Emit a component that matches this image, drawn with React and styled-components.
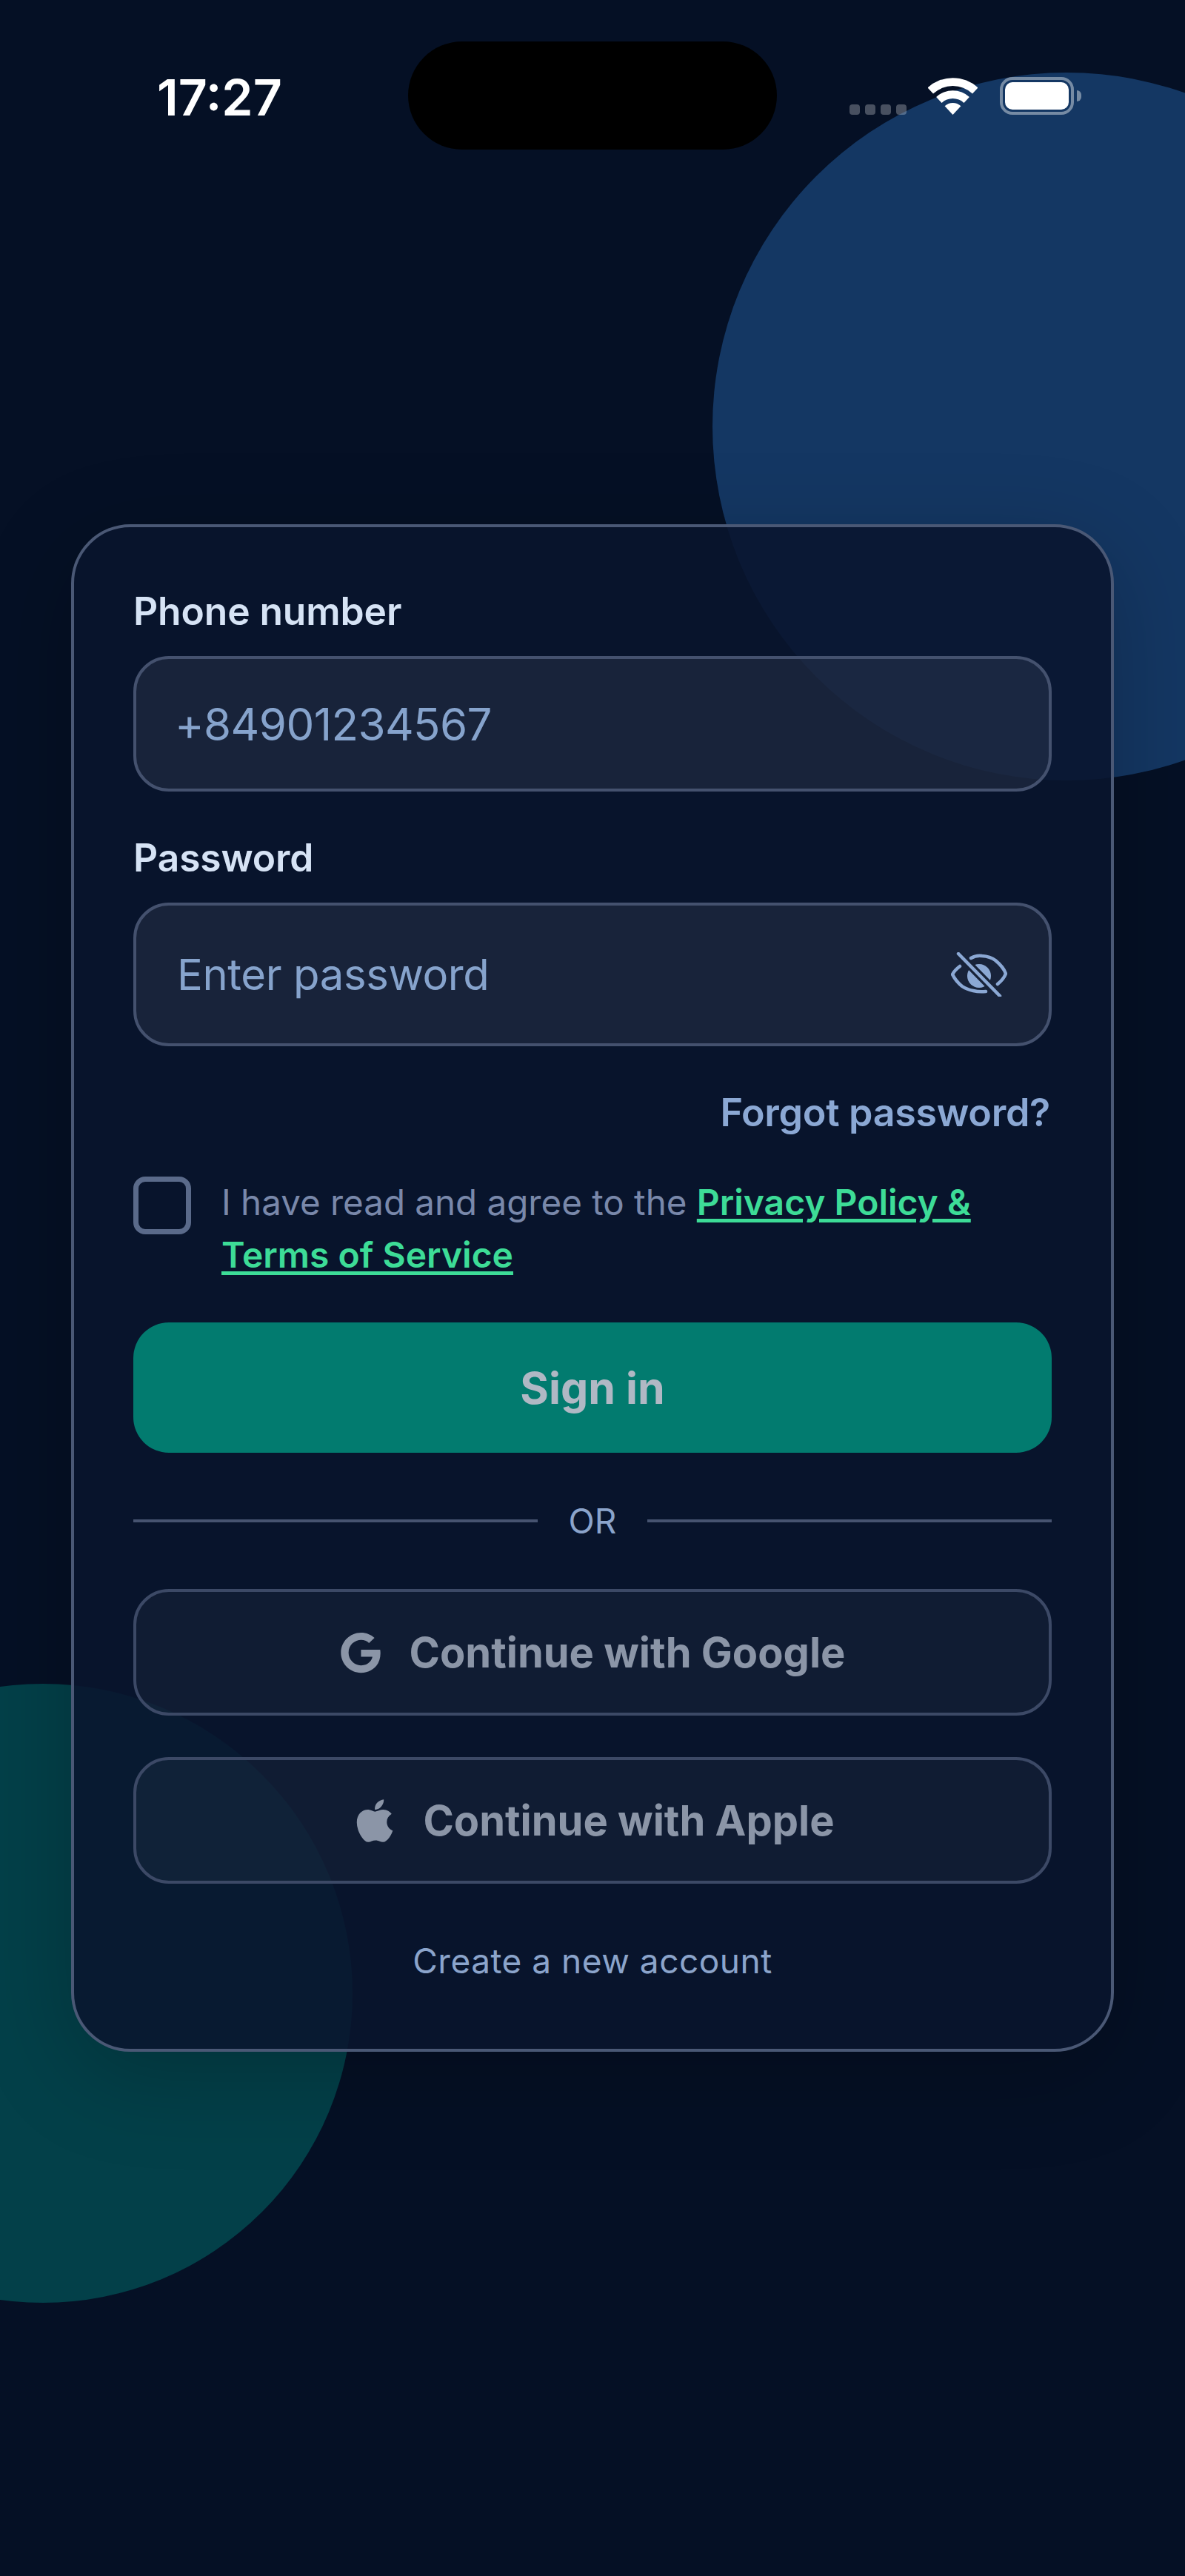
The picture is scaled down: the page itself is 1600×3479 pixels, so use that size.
import styled, { createGlobalStyle } from "styled-components";
import { FaApple } from "react-icons/fa";

const GlobalStyle = createGlobalStyle`
  html, body {
    margin: 0;
    padding: 0;
    background: #051025;
  }
  * {
    box-sizing: border-box;
  }
`;

const Screen = styled.div`
  position: relative;
  width: 1600px;
  height: 3479px;
  overflow: hidden;
  background: #051025;
  font-family: Inter, "Noto Sans", sans-serif;
`;

const Blob = styled.div`
  position: absolute;
  border-radius: 50%;
  background: ${(p) => p.$color};
  left: ${(p) => p.$x}px;
  top: ${(p) => p.$y}px;
  width: ${(p) => p.$size}px;
  height: ${(p) => p.$size}px;
`;

const StatusBar = styled.div`
  position: relative;
  display: flex;
  align-items: flex-start;
  height: 708px;
  padding: 56px 0 0 212px;
`;

const Time = styled.div`
  width: 339px;
  margin-top: 41px;
  font-size: 68px;
  line-height: 68px;
  font-weight: 600;
  color: #fff;
`;

const Island = styled.div`
  width: 498px;
  height: 146px;
  border-radius: 73px;
  background: #000;
`;

const StatusIcons = styled.div`
  display: flex;
  align-items: flex-end;
  margin: 48px 0 0 98px;
`;

const Dots = styled.div`
  display: flex;
  gap: 7px;
  margin-right: 29px;
`;

const Dot = styled.span`
  width: 14px;
  height: 14px;
  border-radius: 4px;
  background: rgba(255, 255, 255, 0.27);
`;

const Battery = styled.div`
  position: relative;
  width: 100px;
  height: 51px;
  margin-left: 30px;
  padding: 3px;
  border: 4px solid rgba(255, 255, 255, 0.42);
  border-radius: 17px;
`;

const BatteryFill = styled.div`
  width: 100%;
  height: 100%;
  border-radius: 10px;
  background: #fff;
`;

const BatteryCap = styled.span`
  position: absolute;
  right: -14px;
  top: 14px;
  width: 6px;
  height: 15px;
  border-radius: 0 6px 6px 0;
  background: rgba(255, 255, 255, 0.42);
`;

const Card = styled.div`
  position: relative;
  width: 1408px;
  height: 2063px;
  margin: 0 auto;
  padding: 80px;
  border: 4px solid #4a5875;
  border-radius: 80px;
  background: rgba(9, 20, 46, 0.88);
  box-shadow: 0 32px 128px rgba(0, 0, 0, 0.22);
`;

const Label = styled.div`
  height: 66px;
  font-size: 51.5px;
  line-height: 66px;
  font-weight: 600;
  letter-spacing: -0.1px;
  color: #d6e3f5;
`;

const Field = styled.div`
  display: flex;
  align-items: center;
  justify-content: space-between;
  height: ${(p) => p.$height}px;
  margin-top: ${(p) => p.$top}px;
  padding: 0 56px 0 55px;
  border: 4px solid #44516e;
  border-radius: 48px;
  background: rgba(255, 255, 255, 0.065);
`;

const FieldText = styled.span`
  font-size: ${(p) => p.$size}px;
  line-height: 72px;
  font-weight: 400;
  letter-spacing: ${(p) => p.$spacing}px;
  margin-left: ${(p) => p.$shift}px;
  color: #86a3cc;
`;

const PasswordLabel = styled(Label)`
  margin-top: 56px;
`;

const Forgot = styled.div`
  margin-top: 57px;
  height: 66px;
  text-align: right;
  padding-right: 2px;
  font-size: 52px;
  line-height: 66px;
  font-weight: 600;
  letter-spacing: -0.3px;
  color: #8ba8d4;
`;

const Agree = styled.div`
  display: flex;
  align-items: flex-start;
  gap: 41px;
  margin-top: 50px;
`;

const Checkbox = styled.span`
  flex: none;
  width: 78px;
  height: 78px;
  margin-top: 3px;
  border: 7px solid #5a6a8a;
  border-radius: 16px;
`;

const AgreeText = styled.p`
  margin: 0;
  width: 1100px;
  padding-top: 2px;
  font-size: 47.5px;
  line-height: 71px;
  color: #7988aa;
`;

const AgreeLink = styled.a`
  font-size: 48px;
  font-weight: 600;
  color: #3ddc97;
  text-decoration: underline;
  text-decoration-thickness: 5px;
  text-underline-offset: 5px;
`;

const Submit = styled.button`
  display: block;
  width: 100%;
  height: 176px;
  margin-top: 56px;
  border: none;
  border-radius: 48px;
  background: #027b6f;
  font-family: inherit;
  font-size: 59px;
  font-weight: 700;
  color: #b0b8c4;
`;

const Divider = styled.div`
  display: flex;
  align-items: center;
  gap: 42px;
  margin-top: 68px;
  height: 48px;
`;

const Rule = styled.span`
  flex: 1;
  height: 4px;
  background: #465370;
`;

const DividerText = styled.span`
  font-size: 46px;
  line-height: 48px;
  color: #8ba4cb;
`;

const Social = styled.button`
  display: flex;
  align-items: center;
  justify-content: center;
  gap: ${(p) => p.$gap}px;
  width: 100%;
  height: 171px;
  margin-top: ${(p) => p.$top}px;
  border: 4px solid #3c4966;
  border-radius: 48px;
  background: rgba(255, 255, 255, 0.035);
  font-family: inherit;
  font-size: 56px;
  font-weight: 700;
  color: #8b95a7;
  svg {
    flex: none;
  }
`;

const CreateLink = styled.div`
  margin-top: 74px;
  text-align: center;
  font-size: 46px;
  line-height: 60px;
  letter-spacing: 0.5px;
  color: #8ba4cb;
`;

const WifiIcon = () => (
  <svg width="67" height="50" viewBox="0 0 67 50" fill="#fff">
    <path d="M-.5 13.5A50 50 0 0 1 67.5 13.5L60 21.5A39 39 0 0 0 7 21.5Z" />
    <path d="M11.1 26A33 33 0 0 1 55.9 26L48.5 34A22 22 0 0 0 18.5 34Z" />
    <path d="M22.6 38.3A16 16 0 0 1 44.4 38.3L33.5 50Z" />
  </svg>
);

const EyeOffIcon = () => (
  <svg width="76" height="60" viewBox="0 0 76 60" fill="none" stroke="#8ba8d4" strokeWidth="4.5" strokeLinecap="round">
    <path d="M27 8C32 5 38 4.5 42 5C50 5.5 56 8 60 11C66 16 72 23 74 29C72 34 68 39 63 43" />
    <path d="M12 19C8 22 4 26 2 30C5 36 10 42 15 46C20 49.5 25 51 30 52C36 53.5 42 53.5 47 53" />
    <circle cx="38" cy="32" r="16" fill="#8ba8d4" stroke="none" />
    <path d="M10 2L66 59" stroke="#172238" strokeWidth="11" strokeLinecap="butt" />
    <path d="M10 2L66 59" />
  </svg>
);

const GoogleIcon = () => (
  <svg width="56" height="56" viewBox="0 0 488 512" fill="#8b95a7">
    <path d="M488 261.8C488 403.3 391.1 504 248 504 110.8 504 0 393.2 0 256S110.8 8 248 8c66.8 0 123 24.5 166.3 64.9l-67.5 64.9C258.5 52.6 94.3 116.6 94.3 256c0 86.5 69.1 156.6 153.7 156.6 98.2 0 135-70.4 140.8-106.9H248v-85.3h236.1c2.3 12.7 3.9 24.9 3.9 41.4z" />
  </svg>
);

const App = () => {
  return (
    <Screen>
      <GlobalStyle />
      <Blob $color="#143763" $x={962} $y={98} $size={956} />
      <Blob $color="#034049" $x={-360} $y={2274} $size={836} />
      <StatusBar>
        <Time>17:27</Time>
        <Island />
        <StatusIcons>
          <Dots>
            <Dot />
            <Dot />
            <Dot />
            <Dot />
          </Dots>
          <WifiIcon />
          <Battery>
            <BatteryFill />
            <BatteryCap />
          </Battery>
        </StatusIcons>
      </StatusBar>
      <Card>
        <Label>Phone number</Label>
        <Field $height={183} $top={28}>
          <FieldText $size={60} $spacing={-0.6} $shift={-3}>+84901234567</FieldText>
        </Field>
        <PasswordLabel>Password</PasswordLabel>
        <Field $height={194} $top={28}>
          <FieldText $size={58} $spacing={-0.4} $shift={0}>Enter password</FieldText>
          <EyeOffIcon />
        </Field>
        <Forgot>Forgot password?</Forgot>
        <Agree>
          <Checkbox />
          <AgreeText>
            I have read and agree to the <AgreeLink>Privacy Policy &amp; Terms of Service</AgreeLink>
          </AgreeText>
        </Agree>
        <Submit>Sign in</Submit>
        <Divider>
          <Rule />
          <DividerText>OR</DividerText>
          <Rule />
        </Divider>
        <Social $top={68} $gap={38}>
          <GoogleIcon />
          Continue with Google
        </Social>
        <Social $top={56} $gap={32}>
          <FaApple size={66} />
          Continue with Apple
        </Social>
        <CreateLink>Create a new account</CreateLink>
      </Card>
    </Screen>
  );
};

export default App;
